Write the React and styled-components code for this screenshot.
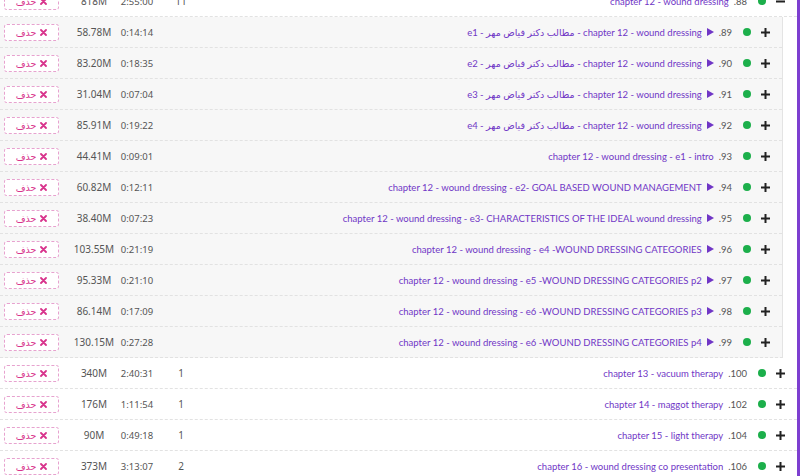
import React from "react";
import styled, { createGlobalStyle } from "styled-components";

const GlobalStyle = createGlobalStyle`
    html, body {
        margin: 0;
        padding: 0;
        background: #fff;
        overflow: hidden;
    }
    body {
        font-family: "Noto Sans", "DejaVu Sans", sans-serif;
    }
`;

const Card = styled.div`
    width: 800px;
    box-sizing: border-box;
    border-right: 3px solid #7d3fd0;
    margin-top: -14px;
    direction: rtl;
`;

const Row = styled.div`
    display: grid;
    grid-template-columns: 20px 16px 1fr 50px 38px 48px 70px;
    align-items: center;
    height: 30px;
    padding-right: 7px;
    border-bottom: 1px dashed #e2e2e2;
`;

const Nested = styled.div`
    margin-right: 14px;
    background: #f7f7f7;
    border-right: 1px solid #e4e4e4;
    border-bottom: 1px dashed #e2e2e2;

    ${Row}:last-child {
        border-bottom: none;
    }
`;

const Toggle = styled.span`
    display: flex;
    justify-content: center;
    align-items: center;
`;

const Dot = styled.span`
    justify-self: center;
    width: 8px;
    height: 8px;
    border-radius: 50%;
    background: #1caf4b;
`;

const TitleCell = styled.div`
    padding-right: 7px;
    font-family: Lato, "DejaVu Sans", sans-serif;
    font-size: 9.5px;
    white-space: nowrap;
    overflow: hidden;
    display: flex;
    align-items: center;
    gap: 5px;
`;

const Num = styled.span`
    color: #555;
`;

const Title = styled.span`
    color: #7036c6;
`;

const Cell = styled.span`
    text-align: center;
    font-size: ${(p) => p.$size || 10}px;
    color: #555;
    direction: ltr;
`;

const ActionCell = styled.div`
    display: flex;
    justify-content: flex-start;
    padding-left: 4px;
    direction: ltr;
`;

const DeleteButton = styled.button`
    width: 55px;
    height: 17px;
    box-sizing: border-box;
    padding: 0;
    border: 1px dashed #e7a2cf;
    border-radius: 3px;
    background: #fff;
    color: #d8338c;
    font-family: "DejaVu Sans", sans-serif;
    font-size: 9.5px;
    display: flex;
    align-items: center;
    justify-content: center;
    gap: 4px;
    direction: rtl;
`;

const PlusIcon = ({ open }) => (
    <svg width="9" height="9" viewBox="0 0 9 9">
        <rect x="0" y="3.5" width="9" height="2" fill="#222" />
        {!open && <rect x="3.5" y="0" width="2" height="9" fill="#222" />}
    </svg>
);

const PlayIcon = () => (
    <svg width="7" height="8" viewBox="0 0 7 8">
        <path d="M0 0 L7 4 L0 8 Z" fill="#7036c6" />
    </svg>
);

const CrossIcon = () => (
    <svg width="7" height="7" viewBox="0 0 7 7">
        <path d="M1 1 L6 6 M6 1 L1 6" stroke="#d8338c" strokeWidth="1.8" strokeLinecap="round" />
    </svg>
);

const lesson = "chapter 12 - wound dressing - ";
const persian = "chapter 12 - wound dressing - مطالب دکتر فیاض مهر - ";

const children = [
    { n: "89", title: persian + "e1", dur: "0:14:14", size: "58.78M", play: true },
    { n: "90", title: persian + "e2", dur: "0:18:35", size: "83.20M", play: true },
    { n: "91", title: persian + "e3", dur: "0:07:04", size: "31.04M", play: true },
    { n: "92", title: persian + "e4", dur: "0:19:22", size: "85.91M", play: true },
    { n: "93", title: lesson + "e1 - intro", dur: "0:09:01", size: "44.41M" },
    { n: "94", title: lesson + "e2- GOAL BASED WOUND MANAGEMENT", dur: "0:12:11", size: "60.82M", play: true },
    { n: "95", title: lesson + "e3- CHARACTERISTICS OF THE IDEAL wound dressing", dur: "0:07:23", size: "38.40M", play: true },
    { n: "96", title: lesson + "e4 -WOUND DRESSING CATEGORIES", dur: "0:21:19", size: "103.55M", play: true },
    { n: "97", title: lesson + "e5 -WOUND DRESSING CATEGORIES p2", dur: "0:21:10", size: "95.33M", play: true },
    { n: "98", title: lesson + "e6 -WOUND DRESSING CATEGORIES p3", dur: "0:17:09", size: "86.14M", play: true },
    { n: "99", title: lesson + "e6 -WOUND DRESSING CATEGORIES p4", dur: "0:27:28", size: "130.15M", play: true },
];

const chapters = [
    { n: "88", title: "chapter 12 - wound dressing", count: "11", dur: "2:55:00", size: "818M", open: true, children },
    { n: "100", title: "chapter 13 - vacuum therapy", count: "1", dur: "2:40:31", size: "340M" },
    { n: "102", title: "chapter 14 - maggot therapy", count: "1", dur: "1:11:54", size: "176M" },
    { n: "104", title: "chapter 15 - light therapy", count: "1", dur: "0:49:18", size: "90M" },
    { n: "106", title: "chapter 16 - wound dressing co presentation", count: "2", dur: "3:13:07", size: "373M" },
];

const ItemRow = ({ item }) => (
    <Row>
        <Toggle><PlusIcon open={item.open} /></Toggle>
        <Dot />
        <TitleCell>
            <Num>{item.n}.</Num>
            {item.play && <PlayIcon />}
            <Title>{item.title}</Title>
        </TitleCell>
        <Cell>{item.count}</Cell>
        <Cell $size={9.5}>{item.dur}</Cell>
        <Cell>{item.size}</Cell>
        <ActionCell>
            <DeleteButton>
                <CrossIcon />
                <span>حذف</span>
            </DeleteButton>
        </ActionCell>
    </Row>
);

const App = () => {
    return (
        <>
            <GlobalStyle />
            <Card>
                {chapters.map((chapter) => (
                    <React.Fragment key={chapter.n}>
                        <ItemRow item={chapter} />
                        {chapter.open && (
                            <Nested>
                                {chapter.children.map((child) => (
                                    <ItemRow key={child.n} item={child} />
                                ))}
                            </Nested>
                        )}
                    </React.Fragment>
                ))}
            </Card>
        </>
    );
};

export default App;
